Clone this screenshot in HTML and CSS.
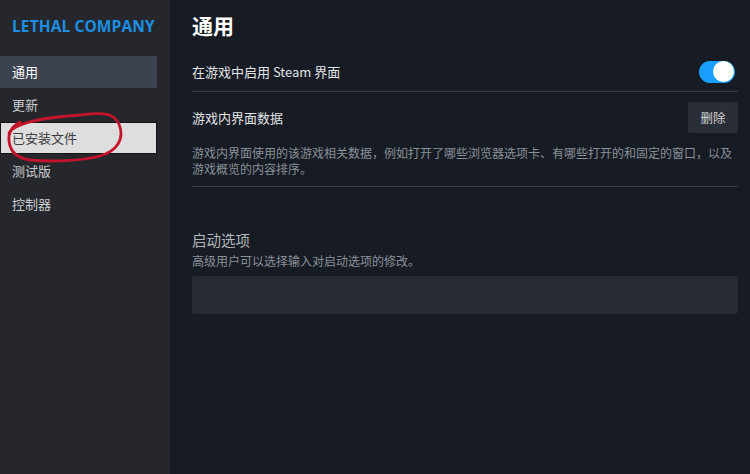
FILE: index.html
```html
<!DOCTYPE html>
<html lang="zh-CN">
<head>
<meta charset="utf-8">
<title>Lethal Company 属性</title>
<link rel="stylesheet" href="styles.css">
</head>
<body>
<div class="app">
  <aside class="sidebar">
    <div class="game-title">LETHAL COMPANY</div>
    <nav class="menu">
      <div class="item active">通用</div>
      <div class="item">更新</div>
      <div class="item marked">已安装文件</div>
      <div class="item">测试版</div>
      <div class="item">控制器</div>
    </nav>
    <svg class="scribble" width="140" height="60" viewBox="0 105 140 60">
      <path d="M9,133 C16,121 50,117 80,115 C100,113 113,111 119,124 C125,139 117,151 100,156 C82,161 50,162 30,160 C15,158 10,150 9,141 C8,133 11,127 20,122" fill="none" stroke="#c4142b" stroke-width="2.8" stroke-linecap="round" stroke-linejoin="round"/>
    </svg>
  </aside>
  <main class="content">
    <h1 class="heading">通用</h1>
    <div class="row toggle-row">
      <span class="label">在游戏中启用 Steam 界面</span>
      <span class="toggle"><span class="knob"></span></span>
    </div>
    <div class="row block">
      <div class="block-head">
        <span class="label">游戏内界面数据</span>
        <button class="btn">删除</button>
      </div>
      <p class="desc">游戏内界面使用的该游戏相关数据，例如打开了哪些浏览器选项卡、有哪些打开的和固定的窗口，以及游戏概览的内容排序。</p>
    </div>
    <section class="launch">
      <div class="launch-title">启动选项</div>
      <p class="desc small">高级用户可以选择输入对启动选项的修改。</p>
      <div class="input"></div>
    </section>
  </main>
</div>
</body>
</html>
```

FILE: styles.css
```css
* { box-sizing: border-box; }
html, body {
  margin: 0;
  padding: 0;
  width: 750px;
  height: 474px;
  overflow: hidden;
  background: #171b23;
  font-family: "Noto Sans", "Noto Sans CJK SC", sans-serif;
}
.app {
  display: flex;
  height: 474px;
}
.sidebar {
  position: relative;
  width: 170px;
  flex: none;
  background: #25272c;
  padding-top: 14px;
}
.game-title {
  color: #1d8fe3;
  font-family: "Open Sans", "Noto Sans", sans-serif;
  font-weight: 700;
  font-size: 15.5px;
  letter-spacing: 0.1px;
  padding-left: 12px;
  height: 24px;
  line-height: 24px;
}
.menu {
  margin-top: 18px;
  width: 157px;
  display: flex;
  flex-direction: column;
  gap: 1px;
}
.item {
  height: 32px;
  line-height: 32px;
  padding-left: 12px;
  font-size: 13px;
  color: #c9ccd0;
  font-family: "Noto Sans CJK SC", sans-serif;
}
.item.active {
  background: #3d4250;
  color: #ffffff;
}
.item.marked {
  background: #dededf;
  color: #3a3c40;
  border: 1px solid #141414;
  line-height: 30px;
  padding-left: 11px;
}
.scribble {
  position: absolute;
  left: 0;
  top: 105px;
}
.content {
  flex: 1;
  padding: 0 12px 0 22px;
  color: #dcdedf;
  font-family: "Noto Sans CJK SC", sans-serif;
}
.heading {
  margin: 0;
  font-size: 21px;
  font-weight: 700;
  color: #ffffff;
  height: 52px;
  line-height: 50px;
}
.row {
  border-bottom: 1px solid #353a43;
}
.toggle-row {
  height: 40px;
  display: flex;
  align-items: center;
  justify-content: space-between;
  padding-right: 3px;
}
.label {
  font-size: 13px;
  color: #e2e4e6;
}
.toggle {
  width: 36px;
  height: 22px;
  border-radius: 11px;
  background: #1a9fff;
  display: flex;
  justify-content: flex-end;
  align-items: center;
  padding-right: 1px;
}
.knob {
  width: 21px;
  height: 21px;
  border-radius: 50%;
  background: #ffffff;
}
.block {
  padding-top: 10px;
  padding-bottom: 9px;
}
.block-head {
  display: flex;
  justify-content: space-between;
  align-items: center;
  height: 31px;
}
.btn {
  width: 50px;
  height: 31px;
  border: none;
  border-radius: 2px;
  background: #2a2e36;
  color: #d4d6d8;
  font-family: "Noto Sans CJK SC", sans-serif;
  font-size: 12.5px;
  padding: 0;
}
.desc {
  margin: 12px 0 0 0;
  font-size: 12px;
  line-height: 16px;
  color: #8a9199;
}
.launch {
  padding-top: 43px;
}
.launch-title {
  font-size: 14.5px;
  color: #b4b8bc;
  line-height: 20px;
}
.desc.small {
  margin-top: 3px;
}
.input {
  margin-top: 7px;
  height: 38px;
  background: #272a32;
  border-radius: 3px;
}
```
